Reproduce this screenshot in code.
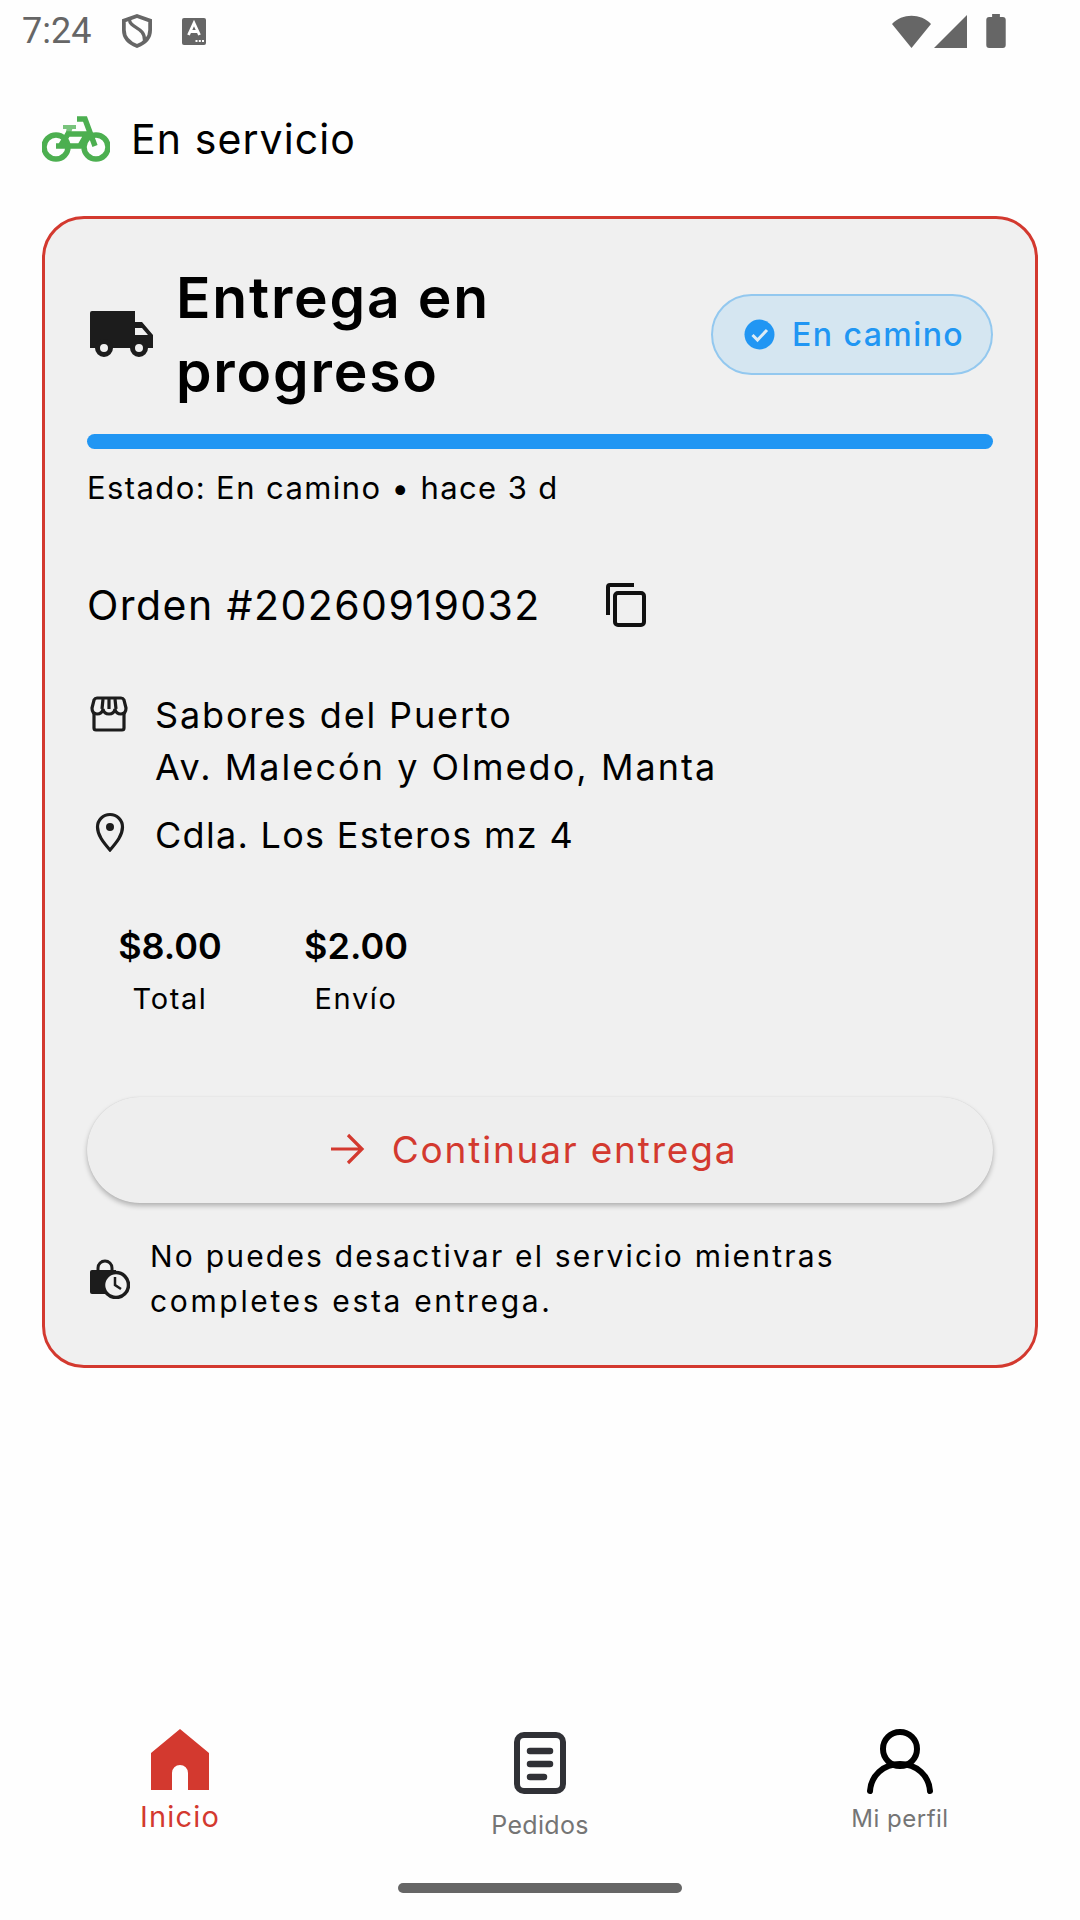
<div class="page">
  <div class="status">
    <span class="time">7:24</span>
    <svg class="shield" width="30" height="36" viewBox="0 0 32 36"><path d="M16 2 L30 7 V17 C30 25 24 31 16 34 C8 31 2 25 2 17 V7 Z" fill="none" stroke="#666" stroke-width="4"/><path d="M8 6 C8 15 25 14 24 28" fill="none" stroke="#666" stroke-width="3.500"/></svg>
    <svg class="akey" width="24" height="27" viewBox="0 0 24 27"><rect width="24" height="27" rx="2" fill="#666"/><path d="M6.500 17 L12 5 L17.500 17 M8.500 13.500 H15.500" fill="none" stroke="#fff" stroke-width="2.800"/><path d="M13.500 23 h2 M16.800 23 h2 M20 23 h2" stroke="#fff" stroke-width="2"/></svg>
    <span class="grow"></span>
    <svg width="39" height="33" viewBox="0 0 39 33"><path d="M0 9 C10 -2 29 -2 39 9 L19.500 33 Z" fill="#666"/></svg>
    <svg class="signal" width="33" height="33" viewBox="0 0 33 33"><path d="M33 0 V33 H0 Z" fill="#666"/></svg>
    <svg class="batt" width="20" height="34" viewBox="0 0 20 35"><path d="M6 0 H14 V3 H17 Q20 3 20 6 V32 Q20 35 17 35 H3 Q0 35 0 32 V6 Q0 3 3 3 H6 Z" fill="#666"/></svg>
  </div>

  <div class="service">
    <svg width="68" height="46" viewBox="0 0 68 46">
      <g fill="none" stroke="#4caf50" stroke-width="5.500">
        <circle cx="14" cy="31" r="12"/><circle cx="54" cy="31" r="12"/>
        <path d="M14 30 H38 L45 18 H26 L19 29 M35 3 H43 L53 30"/>
      </g>
      <path d="M21 9 H34 V13 H21 Z M25 11 H31 L28 20 H23 Z" fill="#4caf50" opacity=".75"/>
    </svg>
    <span>En servicio</span>
  </div>

  <section class="card">
    <div class="head">
      <svg class="truck" width="64" height="46" viewBox="0 0 64 46">
        <path d="M2 0 H45 V11 H52 L63 24 V37 H0 V2 Q0 0 2 0 Z" fill="#1c1c1c"/>
        <path d="M45 17 H52 L58 24 H45 Z" fill="#f0f0f0"/>
        <circle cx="14" cy="37" r="6.500" fill="#f0f0f0" stroke="#1c1c1c" stroke-width="5"/>
        <circle cx="49" cy="37" r="6.500" fill="#f0f0f0" stroke="#1c1c1c" stroke-width="5"/>
      </svg>
      <h1>Entrega en<br />progreso</h1>
      <div class="chip">
        <svg width="31" height="31" viewBox="0 0 31 31"><circle cx="15.500" cy="15.500" r="15" fill="#2196f3"/><path d="M8.500 16 L13.500 21 L23 11" fill="none" stroke="#dcebf5" stroke-width="3"/></svg>
        <span>En camino</span>
      </div>
    </div>

    <div class="bar"></div>
    <p class="state">Estado: En camino • hace 3 d</p>

    <div class="order">
      <span>Orden #20260919032</span>
      <svg width="40" height="44" viewBox="0 0 40 44"><path d="M28 2 H4 Q2 2 2 4 V32" fill="none" stroke="#111" stroke-width="4"/><rect x="9" y="10" width="29" height="32" rx="3" fill="none" stroke="#111" stroke-width="4"/></svg>
    </div>

    <div class="place first">
      <svg class="ic" width="38" height="36" viewBox="0 0 38 36" fill="none" stroke="#1c1c1c" stroke-width="3.200">
        <path d="M7 2 H31 Q33 2 34 4 L36 12 Q36 18 31 18 Q26 18 25 13 Q24 18 19 18 Q14 18 13 13 Q12 18 7 18 Q2 18 2 12 L4 4 Q5 2 7 2 Z"/>
        <path d="M13 3 L12 13 M25 3 L26 13 M19 3 V13"/>
        <path d="M4 18 V32 Q4 34 6 34 H32 Q34 34 34 32 V18"/>
      </svg>
      <p><span class="l1">Sabores del Puerto</span><br />Av. Malecón y Olmedo, Manta</p>
    </div>
    <div class="place second">
      <svg class="ic" width="38" height="40" viewBox="0 0 38 40" fill="none">
        <path d="M19 38 C12 30 6.500 23 6.500 15 A12.500 12.500 0 0 1 31.500 15 C31.500 23 26 30 19 38 Z" stroke="#1c1c1c" stroke-width="3.200"/>
        <circle cx="19" cy="15" r="4" fill="#1c1c1c"/>
      </svg>
      <p>Cdla. Los Esteros mz 4</p>
    </div>

    <div class="prices">
      <div class="price"><b>$8.00</b><span>Total</span></div>
      <div class="price"><b>$2.00</b><span>Envío</span></div>
    </div>

    <button class="cta">
      <svg width="34" height="32" viewBox="0 0 34 32" fill="none" stroke="#d3392f" stroke-width="3.200"><path d="M0 16 H31 M17 2 L31 16 L17 30"/></svg>
      <span>Continuar entrega</span>
    </button>

    <div class="note">
      <svg width="40" height="40" viewBox="0 0 40 40">
        <path d="M8 11 V9 A7 7 0 0 1 22 9 V11" fill="none" stroke="#1c1c1c" stroke-width="3"/>
        <path d="M2 11 H26 V35 H2 Q0 35 0 33 V13 Q0 11 2 11 Z" fill="#1c1c1c"/>
        <circle cx="26" cy="26" r="12.500" fill="#f0f0f0" stroke="#1c1c1c" stroke-width="3.500"/>
        <path d="M25 18 V26 L31 30" fill="none" stroke="#1c1c1c" stroke-width="2.500"/>
      </svg>
      <p>No puedes desactivar el servicio mientras<br /><span class="l2">completes esta entrega.</span></p>
    </div>
  </section>

  <nav class="nav">
    <div class="tab active">
      <svg width="58" height="61" viewBox="0 0 58 61"><path fill-rule="evenodd" d="M29 0 L58 24 V61 H37 V44 A8 8 0 0 0 21 44 V61 H0 V24 Z" fill="#d3392f"/></svg>
      <span>Inicio</span>
    </div>
    <div class="tab orders">
      <svg width="52" height="62" viewBox="0 0 52 62" fill="none" stroke="#303136"><rect x="3" y="3" width="46" height="56" rx="7" stroke-width="6"/><path d="M16 19 H36 M16 32 H36 M16 45 H30" stroke-width="6.500" stroke-linecap="round"/></svg>
      <span>Pedidos</span>
    </div>
    <div class="tab profile">
      <svg width="66" height="66" viewBox="0 0 66 66" fill="none" stroke="#000" stroke-width="6" stroke-linecap="round"><circle cx="33" cy="20" r="17"/><path d="M3 62 C4 47 16 35 33 35 C50 35 62 47 63 62"/></svg>
      <span>Mi perfil</span>
    </div>
  </nav>
  <div class="handle-row"><div class="handle"></div></div>
</div>

<style>
  :global(body) { margin: 0; background: #fefefe; }
  .page { width: 1080px; height: 1920px; display: flex; flex-direction: column; font-family: Inter, "Noto Sans", sans-serif; color: #000; overflow: hidden; background: #fefefe; }
  p, h1 { margin: 0; }
  .status { display: flex; align-items: center; height: 62px; padding: 0 74px 0 22px; box-sizing: border-box; }
  .time { font: 36px Roboto, sans-serif; color: #666; width: 100px; }
  .akey { margin-left: 30px; }
  .grow { flex: 1; }
  .signal { margin-left: 3px; }
  .batt { margin-left: 19px; }
  .service { display: flex; align-items: center; gap: 21px; padding: 54px 42px 0; height: 46px; margin-bottom: 54px; font-size: 41px; letter-spacing: 1.1px; }
  .service svg { flex: none; }
  .card { margin: 0 42px; height: 1152px; box-sizing: border-box; border: 3px solid #d3392f; border-radius: 42px; background: #f0f0f0; padding: 43px 42px 0; }
  .head { display: flex; align-items: center; height: 148px; }
  .truck { flex: none; margin: -4px 0 0 3px; }
  h1 { font-size: 57px; font-weight: 600; line-height: 74px; letter-spacing: 1.8px; margin: -2px 0 0 22px; flex: 1; }
  .chip { display: flex; align-items: center; gap: 17px; width: 282px; height: 81px; box-sizing: border-box; padding-left: 31px; border: 2.500px solid #93c8ef; border-radius: 41px; background: #d5e6f1; color: #2196f3; font-size: 32px; font-weight: 500; letter-spacing: 1.45px; margin-top: -4px; }
  .bar { height: 15px; border-radius: 8px; background: #2196f3; margin-top: 24px; }
  .state { font-size: 31px; line-height: 40px; margin-top: 19px; letter-spacing: 1.4px; }
  .order { display: flex; align-items: center; gap: 65px; font-size: 41px; height: 44px; margin-top: 75px; }
  .order span { letter-spacing: 1.45px; }
  .place { display: flex; gap: 27px; font-size: 36px; line-height: 52px; }
  .place .ic { flex: none; margin: 7px 0 0 3px; }
  .place p { letter-spacing: 2.05px; }
  .l1 { letter-spacing: 1.85px; }
  .first { margin-top: 62px; }
  .second { margin-top: 16px; }
  .second .ic { margin: 3px 0 0 4px; }
  .second p { margin-left: -1px; letter-spacing: 1.3px; }
  .prices { display: flex; margin: 61px 0 0 -10px; }
  .price { display: flex; flex-direction: column; align-items: center; width: 186px; }
  .price b { font-size: 36px; font-weight: 600; line-height: 48px; }
  .price span { font-size: 29px; line-height: 40px; margin-top: 9px; letter-spacing: 1.6px; }
  .cta { display: flex; align-items: center; justify-content: center; gap: 27px; width: 100%; height: 106px; margin-top: 78px; border: 0; border-radius: 53px; background: #eeeeee; color: #d3392f; font: 37px Inter, sans-serif; letter-spacing: 1.8px; box-shadow: 0 3px 5px rgba(0,0,0,.25), 0 0 1px rgba(0,0,0,.12); padding: 0 12px 2px 0; }
  .note { display: flex; align-items: center; gap: 20px; margin-top: 31px; font-size: 30px; line-height: 45px; letter-spacing: 2.2px; }
  .note svg { flex: none; margin-left: 3px; }
  .l2 { letter-spacing: 2.65px; }
  .nav { display: grid; grid-template-columns: repeat(3, 1fr); margin-top: auto; height: 154px; }
  .tab { display: flex; flex-direction: column; align-items: center; color: #757575; }
  .active { color: #d3392f; font-size: 29px; letter-spacing: 1.2px; }
  .active span { margin-top: 7px; line-height: 40px; }
  .orders { padding-top: 3px; font-size: 25px; letter-spacing: .3px; }
  .orders span { margin-top: 14px; line-height: 34px; }
  .profile { font-size: 24px; letter-spacing: .5px; }
  .profile span { margin-top: 7px; line-height: 34px; }
  .handle-row { height: 37px; box-sizing: border-box; display: flex; justify-content: center; }
  .handle { width: 284px; height: 10px; border-radius: 5px; background: #666; }
</style>
